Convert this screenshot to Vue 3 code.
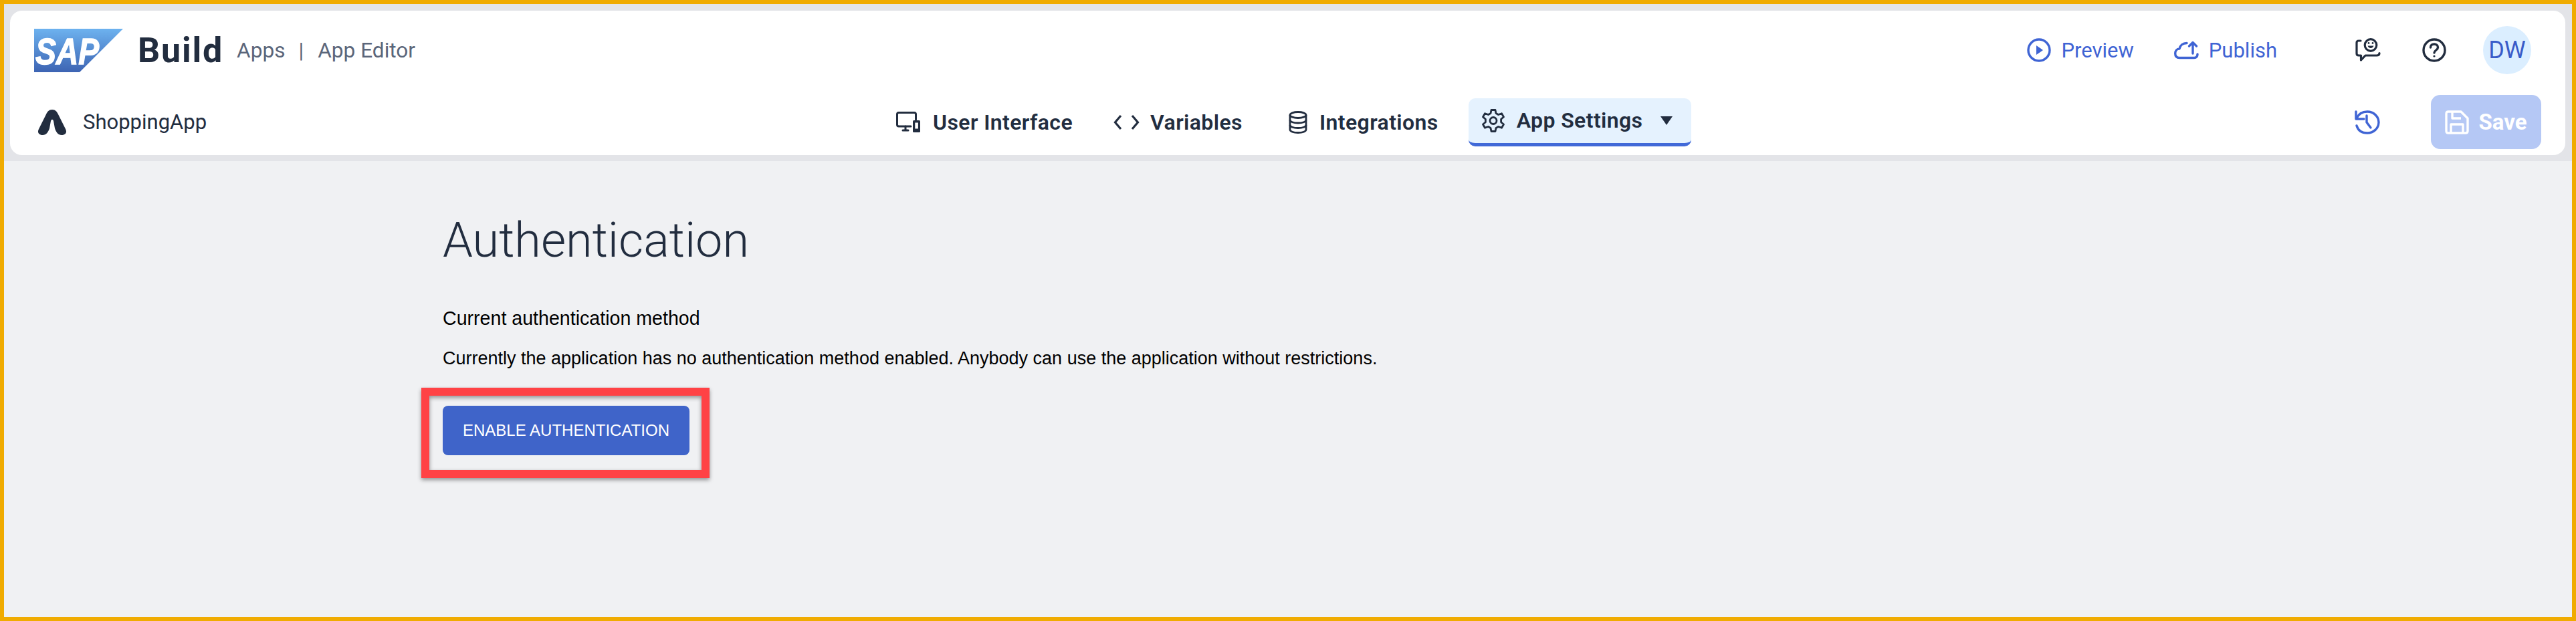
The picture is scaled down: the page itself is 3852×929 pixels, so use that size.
<template>
  <div class="page">
    <header class="top-band">
      <div class="card">
        <div class="row row-top">
          <svg class="sap-logo" width="133" height="65" viewBox="0 0 133 65">
            <defs>
              <linearGradient id="sapGrad" x1="0" y1="0" x2="0" y2="1">
                <stop offset="0" stop-color="#6db2ef" />
                <stop offset="1" stop-color="#3d64b3" />
              </linearGradient>
            </defs>
            <polygon points="0,0 133,0 68,65 0,65" fill="url(#sapGrad)" />
            <text x="2" y="53" class="sap-text" textLength="95" lengthAdjust="spacingAndGlyphs">SAP</text>
          </svg>
          <span class="brand">Build</span>
          <span class="crumb crumb-apps">Apps</span>
          <span class="crumb crumb-sep">|</span>
          <span class="crumb">App Editor</span>

          <div class="top-actions">
            <a class="link link-preview">
              <svg width="36" height="36" viewBox="0 0 36 36" fill="none" stroke="currentColor" stroke-width="3.4">
                <circle cx="18" cy="18" r="16" />
                <path d="M14 11 L24 18 L14 25 Z" fill="currentColor" stroke="none" />
              </svg>
              Preview
            </a>
            <a class="link link-publish">
              <svg width="37" height="28" viewBox="0 0 37 28" fill="none" stroke="currentColor" stroke-width="3.4" stroke-linecap="round" stroke-linejoin="round">
                <path d="M19 3.5 C13 3.5 9 7 8 12 C4 12 1.7 15 1.7 19 C1.7 23 4 25.5 8 25.5 H30 C33.5 25.5 35 23 35 20" />
                <path d="M28 19 V3 M22.5 8 L28 2.5 L33.5 8" />
              </svg>
              Publish
            </a>
            <svg class="icon-feedback" width="38" height="36" viewBox="0 0 38 36" fill="none" stroke="#222d3f" stroke-width="3.2" stroke-linecap="round" stroke-linejoin="round">
              <path d="M8 4 H5 C3 4 2 5 2 7 V23 C2 25 3 26 5 26 H8.5 V33 L15 26 H32 C34.5 26 36 25 36 22.5" />
              <circle cx="23" cy="10.5" r="8.8" />
              <path d="M18.5 11.5 C20 16 26 16 27.5 11.5 Z" fill="#222d3f" stroke="none" />
              <circle cx="20" cy="7.5" r="1.4" fill="#222d3f" stroke="none" />
              <circle cx="26" cy="7.5" r="1.4" fill="#222d3f" stroke="none" />
            </svg>
            <svg class="icon-help" width="36" height="36" viewBox="0 0 36 36" fill="none" stroke="#222d3f" stroke-width="3.4" stroke-linecap="round">
              <circle cx="18" cy="18" r="16" />
              <path d="M12.5 14 C12.5 10.5 15 9 18 9 C21 9 23.5 11 23.5 14 C23.5 18 18 18 18 22" />
              <circle cx="18" cy="27" r="1.6" fill="#222d3f" stroke="none" />
            </svg>
            <div class="avatar">DW</div>
          </div>
        </div>

        <div class="row row-bottom">
          <div class="app-group">
            <svg width="44" height="38" viewBox="0 0 44 38">
              <path fill="#222d3f" d="M22 0 C27 0 29 3 31 7 L42 29 C45 35 41 38 36 38 C31 38 28 34 26 28 L24 17 C23 14 21 14 20 17 L18 28 C16 34 13 38 8 38 C3 38 -1 35 2 29 L13 7 C15 3 17 0 22 0 Z" />
            </svg>
            <span class="app-name">ShoppingApp</span>
          </div>

          <nav class="tabs">
            <div v-for="tab in tabs" :key="tab.label" class="tab" :class="[tab.icon, { active: tab.active }]">
              <svg v-if="tab.icon === 'ui'" width="37" height="32" viewBox="0 0 37 32" fill="none" stroke="#222d3f" stroke-width="3" stroke-linecap="round" stroke-linejoin="round">
                <path d="M22 22 H4 C2.5 22 1.5 21 1.5 19.5 V4 C1.5 2.5 2.5 1.5 4 1.5 H27 C28.5 1.5 29.5 2.5 29.5 4 V12" />
                <path d="M10 28 H18 M14 22 V28" />
                <rect x="25" y="13" width="11" height="18" rx="1.5" fill="#222d3f" stroke="none" />
                <rect x="28.3" y="16.5" width="4.6" height="9" fill="#fff" stroke="none" />
              </svg>
              <svg v-else-if="tab.icon === 'code'" width="39" height="24" viewBox="0 0 39 24" fill="none" stroke="#222d3f" stroke-width="3.2">
                <path d="M11 2 L2.5 12 L11 22" />
                <path d="M28 2 L36.5 12 L28 22" />
              </svg>
              <svg v-else-if="tab.icon === 'db'" width="28" height="34" viewBox="0 0 28 34" fill="none" stroke="#222d3f" stroke-width="2.8">
                <ellipse cx="14" cy="6" rx="12" ry="4.5" />
                <path d="M2 6 V28 C2 30.5 7 32.5 14 32.5 C21 32.5 26 30.5 26 28 V6" />
                <path d="M2 13.5 C2 16 7 18 14 18 C21 18 26 16 26 13.5" />
                <path d="M2 21 C2 23.5 7 25.5 14 25.5 C21 25.5 26 23.5 26 21" />
              </svg>
              <svg v-else width="34" height="35" viewBox="0 0 34 35" fill="none" stroke="#222d3f" stroke-width="2.8" stroke-linejoin="round">
                <path d="M14 1.5 H20 L21 6.5 L24.5 8.5 L29.5 6.8 L32.5 12 L28.6 15.3 V19.7 L32.5 23 L29.5 28.2 L24.5 26.5 L21 28.5 L20 33.5 H14 L13 28.5 L9.5 26.5 L4.5 28.2 L1.5 23 L5.4 19.7 V15.3 L1.5 12 L4.5 6.8 L9.5 8.5 L13 6.5 Z" />
                <circle cx="17" cy="17.5" r="5" />
              </svg>
              <span>{{ tab.label }}</span>
              <span v-if="tab.active" class="caret"></span>
            </div>
          </nav>

          <svg class="icon-history" width="38" height="36" viewBox="0 0 38 36" fill="none" stroke="#3f64d4" stroke-width="3.4" stroke-linecap="round" stroke-linejoin="round">
            <path d="M2 2 V13 H14" />
            <path d="M3 12 C6 5 12 2 19 2 C28 2 36 9 36 18 C36 27 28 34 19 34 C11 34 5 30 3 23" />
            <path d="M18 8 V18 L24 26" />
          </svg>
          <button class="save-btn" disabled>
            <svg width="36" height="36" viewBox="0 0 36 36" fill="none" stroke="#fff" stroke-width="3.4" stroke-linejoin="round">
              <path d="M5 2 H24 L34 12 V31 C34 33 33 34 31 34 H5 C3 34 2 33 2 31 V5 C2 3 3 2 5 2 Z" />
              <path d="M11 2 V12 H24" />
              <path d="M9 34 V21 H27 V34" />
            </svg>
            Save
          </button>
        </div>
      </div>
    </header>

    <main class="content">
      <h1 class="title">Authentication</h1>
      <p class="subtitle">Current authentication method</p>
      <p class="desc">Currently the application has no authentication method enabled. Anybody can use the application without restrictions.</p>
      <div class="cta">
        <button class="enable-btn">ENABLE AUTHENTICATION</button>
        <div class="highlight"></div>
      </div>
    </main>
  </div>
</template>

<script setup>
const tabs = [
  { label: 'User Interface', icon: 'ui' },
  { label: 'Variables', icon: 'code' },
  { label: 'Integrations', icon: 'db' },
  { label: 'App Settings', icon: 'gear', active: true },
]
</script>

<style>
html,
body {
  margin: 0;
}
</style>

<style scoped>
.page {
  box-sizing: border-box;
  width: 3852px;
  height: 929px;
  border: 6px solid #f0ab00;
  background: #f0f1f3;
  font-family: Roboto, sans-serif;
  overflow: hidden;
}

.top-band {
  background: #e3e4e8;
  padding: 10px 10px 9px 9px;
}

.card {
  background: #fff;
  border-radius: 18px;
  height: 216px;
  box-sizing: border-box;
  padding-top: 23px;
}

.row {
  display: flex;
  align-items: center;
}

.row-top {
  height: 72px;
  padding: 0 51px 0 36px;
}

.sap-text {
  font: italic 700 56px 'Liberation Sans', sans-serif;
  fill: #fff;
  stroke: #fff;
  stroke-width: 1.5px;
}

.brand {
  margin-left: 22px;
  font-size: 52px;
  font-weight: 700;
  letter-spacing: 1.8px;
  color: #222d3f;
}

.crumb {
  font-size: 31.6px;
  color: #5b667a;
}

.crumb-apps {
  margin-left: 20px;
}

.crumb-sep {
  margin: 0 21px 0 20px;
}

.top-actions {
  margin-left: auto;
  display: flex;
  align-items: center;
}

.link {
  display: flex;
  align-items: center;
  gap: 15px;
  font-size: 31px;
  color: #3f64d4;
}

.link-publish {
  margin-left: 60px;
}

.icon-feedback {
  margin-left: 117px;
}

.icon-help {
  margin-left: 62px;
}

.avatar {
  margin-left: 55px;
  width: 72px;
  height: 72px;
  border-radius: 50%;
  background: #dbeeff;
  color: #3a5cc9;
  font-size: 36px;
  display: flex;
  align-items: center;
  justify-content: center;
}

.row-bottom {
  height: 81px;
  margin-top: 31px;
  padding: 0 36px 0 41px;
}

.app-group {
  flex: none;
  width: 1284px;
  display: flex;
  align-items: center;
  gap: 24px;
}

.app-name {
  font-size: 31px;
  color: #222d3f;
}

.tabs {
  display: flex;
  align-items: center;
}

.tab {
  display: flex;
  align-items: center;
  gap: 18px;
  height: 72px;
  font-size: 32px;
  font-weight: 600;
  letter-spacing: 0.4px;
  color: #222d3f;
  white-space: nowrap;
}

.tab.code {
  margin-left: 61px;
  gap: 16px;
}

.tab.db {
  margin-left: 69px;
}

.tab.active {
  box-sizing: border-box;
  margin-left: 45px;
  padding: 0 28px 0 20px;
  background: #e5f2fe;
  border-radius: 10px;
  border-bottom: 5px solid #4169d8;
}

.caret {
  margin-left: 9px;
  width: 0;
  height: 0;
  border-left: 9px solid transparent;
  border-right: 9px solid transparent;
  border-top: 13px solid #222d3f;
}

.icon-history {
  margin-left: auto;
}

.save-btn {
  margin-left: 76px;
  width: 165px;
  height: 81px;
  border: 0;
  border-radius: 14px;
  background: #b5c8f5;
  color: #fff;
  font-family: inherit;
  font-size: 33px;
  font-weight: 700;
  display: flex;
  align-items: center;
  justify-content: center;
  gap: 14px;
  padding: 0;
}

.content {
  padding: 70px 0 0 656px;
}

.title {
  margin: 0;
  font-size: 72px;
  font-weight: 300;
  line-height: 98px;
  color: #222d3f;
}

.subtitle,
.desc {
  font-family: 'Liberation Sans', sans-serif;
  color: #000;
  margin: 0;
}

.subtitle {
  margin-top: 49px;
  font-size: 28.6px;
  line-height: 36px;
}

.desc {
  margin-top: 24px;
  font-size: 27px;
  line-height: 36px;
}

.cta {
  position: relative;
  width: 369px;
  margin-top: 53px;
}

.enable-btn {
  display: block;
  width: 369px;
  height: 74px;
  border: 0;
  border-radius: 8px;
  background: #3f64c9;
  color: #fff;
  font-family: 'Liberation Sans', sans-serif;
  font-size: 24px;
  padding: 0;
}

.highlight {
  position: absolute;
  inset: -27px -30px -34px -32px;
  border: 12px solid #ff4245;
  box-shadow: 0 3px 6px rgba(0, 0, 0, 0.4), inset 0 3px 6px rgba(0, 0, 0, 0.4);
  pointer-events: none;
}
</style>
